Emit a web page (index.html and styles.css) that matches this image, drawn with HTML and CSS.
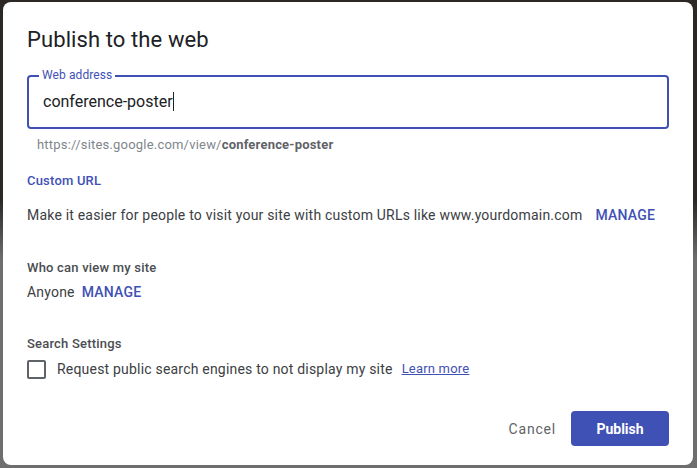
FILE: index.html
```html
<!DOCTYPE html>
<html>
<head>
<meta charset="utf-8">
<link rel="stylesheet" href="styles.css">
</head>
<body>
<div class="backdrop">
  <div class="dialog">
    <h1 class="title">Publish to the web</h1>
    <div class="field">
      <span class="field-label">Web address</span>
      <div class="field-value">conference-poster<span class="caret"></span></div>
    </div>
    <div class="helper">https://sites.google.com/view/<b>conference-poster</b></div>

    <div class="section-title accent">Custom URL</div>
    <div class="row">
      <span class="body-text">Make it easier for people to visit your site with custom URLs like www.yourdomain.com</span>
      <span class="link-btn">MANAGE</span>
    </div>

    <div class="section-title who">Who can view my site</div>
    <div class="row anyone">
      <span class="body-text">Anyone</span>
      <span class="link-btn small-gap">MANAGE</span>
    </div>

    <div class="section-title search">Search Settings</div>
    <div class="check-row">
      <span class="checkbox"></span>
      <span class="body-text">Request public search engines to not display my site</span>
      <span class="learn">Learn more</span>
    </div>

    <div class="actions">
      <span class="cancel">Cancel</span>
      <span class="publish">Publish</span>
    </div>
  </div>
</div>
</body>
</html>
```

FILE: styles.css
```css
html, body {
  margin: 0;
  padding: 0;
}
body {
  width: 697px;
  height: 468px;
  overflow: hidden;
  font-family: Roboto, "Liberation Sans", Arial, sans-serif;
  background: linear-gradient(to bottom, #2b2826 0, #2b2826 200px, #6e6e6e 260px, #6e6e6e 100%);
}
.backdrop {
  padding: 2px 4px 3px 3px;
}
.dialog {
  box-sizing: border-box;
  width: 690px;
  height: 463px;
  background: #fff;
  border-radius: 8px;
  padding: 24px 24px 0 24px;
  display: flex;
  flex-direction: column;
  color: #3c4043;
}
.title {
  margin: 0;
  font-size: 22px;
  font-weight: 400;
  line-height: 28px;
  color: #202124;
  letter-spacing: 0.1px;
}
.field {
  position: relative;
  margin-top: 21px;
  height: 54px;
  box-sizing: border-box;
  border: 2px solid #3f51b5;
  border-radius: 4px;
  display: flex;
  align-items: center;
  padding-left: 14px;
}
.field-label {
  position: absolute;
  top: -9px;
  left: 10px;
  padding: 0 3px 0 3px;
  background: #fff;
  font-size: 12px;
  line-height: 14px;
  color: #3f51b5;
  letter-spacing: 0.1px;
}
.field-value {
  font-size: 16px;
  color: #202124;
  display: flex;
  align-items: center;
  margin-top: -2px;
}
.caret {
  display: inline-block;
  width: 1px;
  height: 19px;
  background: #202124;
  margin-left: 0;
}
.helper {
  margin-top: 8px;
  padding-left: 10px;
  font-size: 13px;
  line-height: 16px;
  color: #80868b;
  letter-spacing: 0.2px;
}
.helper b {
  color: #5f6368;
  font-weight: 700;
}
.section-title {
  font-size: 13px;
  line-height: 16px;
  font-weight: 500;
  color: #4a4d51;
  letter-spacing: 0.2px;
}
.accent {
  color: #3f51b5;
  margin-top: 20px;
}
.row {
  display: flex;
  align-items: center;
  margin-top: 16px;
  line-height: 20px;
}
.body-text {
  font-size: 14px;
  color: #3c4043;
  letter-spacing: 0.2px;
}
.link-btn {
  font-size: 14px;
  font-weight: 500;
  color: #3f51b5;
  margin-left: 13px;
  letter-spacing: 0.2px;
}
.link-btn.small-gap {
  margin-left: 7px;
}
.who {
  margin-top: 35px;
}
.anyone {
  margin-top: 6px;
}
.search {
  margin-top: 34px;
}
.check-row {
  display: flex;
  align-items: center;
  margin-top: 7px;
  line-height: 20px;
}
.checkbox {
  box-sizing: border-box;
  width: 19px;
  height: 19px;
  border: 2px solid #5f6368;
  border-radius: 2px;
  margin-right: 11px;
}
.learn {
  margin-left: 9px;
  font-size: 13px;
  color: #3f51b5;
  text-decoration: underline;
  letter-spacing: 0.2px;
}
.actions {
  margin-top: auto;
  margin-bottom: 19px;
  display: flex;
  justify-content: flex-end;
  align-items: center;
}
.cancel {
  font-size: 14px;
  font-weight: 400;
  color: #5f6368;
  letter-spacing: 0.8px;
  margin-right: 15px;
}
.publish {
  box-sizing: border-box;
  width: 98px;
  height: 35px;
  background: #3f51b5;
  color: #fff;
  border-radius: 4px;
  font-size: 14px;
  font-weight: 700;
  display: flex;
  align-items: center;
  justify-content: center;
}
```
